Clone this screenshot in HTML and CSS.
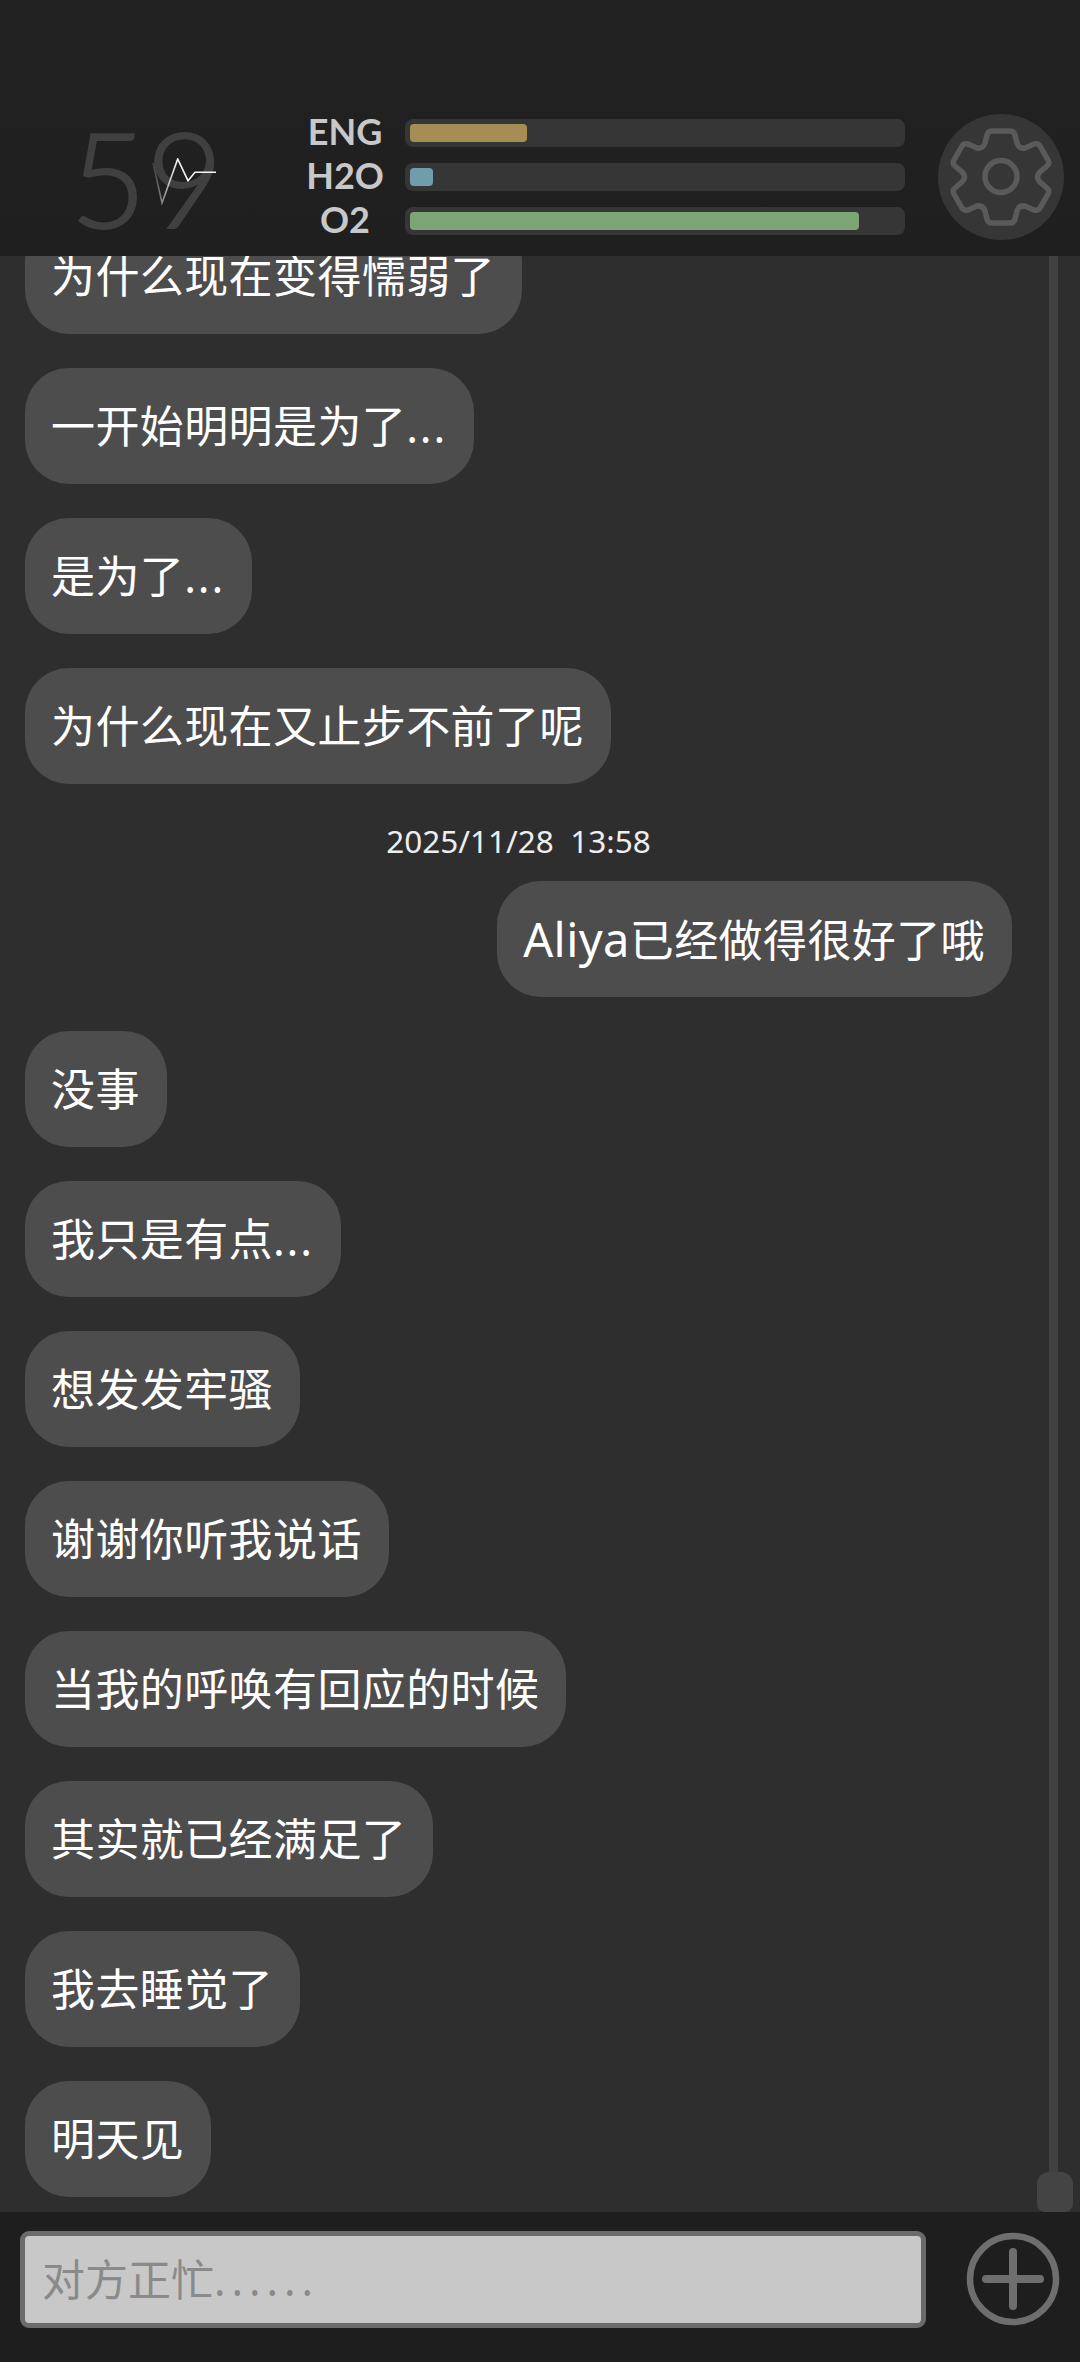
FILE: index.html

```html
<!DOCTYPE html>
<html lang="zh-CN">

<head>
  <meta charset="UTF-8">
  <title>Chat</title>
  <link rel="stylesheet" href="styles.css">
</head>

<body>
  <div class="app">

    <header class="status">
      <div class="readout">
        <span class="readout-num">59</span>
        <svg class="pulse" width="70" height="50" viewBox="0 0 70 50" fill="none">
          <defs>
            <linearGradient id="pulseFade" gradientUnits="userSpaceOnUse" x1="0" y1="0" x2="24" y2="0">
              <stop offset="0" stop-color="#fff" stop-opacity="0.1"></stop>
              <stop offset="1" stop-color="#fff" stop-opacity="0.95"></stop>
            </linearGradient>
          </defs>
          <polyline points="1,5 10,45 25.7,1 36,22.7 43,14.3 64,14.3" stroke="url(#pulseFade)" stroke-width="1.6"></polyline>
        </svg>
      </div>

      <div class="meters">
        <span class="meter-label">ENG</span>
        <div class="meter"><div class="meter-fill fill-eng" style="width: 117px"></div></div>
        <span class="meter-label">H2O</span>
        <div class="meter"><div class="meter-fill fill-h2o" style="width: 23px"></div></div>
        <span class="meter-label">O2</span>
        <div class="meter"><div class="meter-fill fill-o2" style="width: 449px"></div></div>
      </div>

      <button class="gear-btn" type="button" aria-label="settings">
        <svg width="126" height="126" viewBox="-63 -63 126 126" fill="none" stroke="#5a5a5a" stroke-width="5.5" stroke-linejoin="round">
          <path d="M-9 -46 H9 Q13 -46 14 -42 L16 -34 Q18 -28 24 -29 L33 -33 Q37 -34 39 -31 L47 -17 Q49 -13 46 -11 L39 -5 Q34 0 39 5 L46 11 Q49 13 47 17 L39 31 Q37 34 33 33 L24 29 Q18 28 16 34 L14 42 Q13 46 9 46 H-9 Q-13 46 -14 42 L-16 34 Q-18 28 -24 29 L-33 33 Q-37 34 -39 31 L-47 17 Q-49 13 -46 11 L-39 5 Q-34 0 -39 -5 L-46 -11 Q-49 -13 -47 -17 L-39 -31 Q-37 -34 -33 -33 L-24 -29 Q-18 -28 -16 -34 L-14 -42 Q-13 -46 -9 -46 Z"></path>
          <circle cx="0" cy="-0.5" r="16"></circle>
        </svg>
      </button>
    </header>

    <main class="chat">
      <div class="messages">
        <div class="bubble">为什么现在变得懦弱了</div>
        <div class="bubble">一开始明明是为了<span class="dots">...</span></div>
        <div class="bubble">是为了<span class="dots">...</span></div>
        <div class="bubble">为什么现在又止步不前了呢</div>
        <div class="timestamp">2025/11/28  13:58</div>
        <div class="bubble bubble-me"><span class="latin">Aliya</span>已经做得很好了哦</div>
        <div class="bubble">没事</div>
        <div class="bubble">我只是有点<span class="dots">...</span></div>
        <div class="bubble">想发发牢骚</div>
        <div class="bubble">谢谢你听我说话</div>
        <div class="bubble">当我的呼唤有回应的时候</div>
        <div class="bubble">其实就已经满足了</div>
        <div class="bubble">我去睡觉了</div>
        <div class="bubble">明天见</div>
      </div>
      <div class="scroll-rail">
        <div class="scroll-track"></div>
        <div class="scroll-thumb"></div>
      </div>
    </main>

    <footer class="composer">
      <div class="composer-input">对方正忙<span class="input-dots">......</span></div>
      <button class="add-btn" type="button" aria-label="add">
        <svg width="94" height="94" viewBox="0 0 94 94" fill="none" stroke="#6e6e6e">
          <circle cx="47" cy="47" r="43" stroke-width="6.5"></circle>
          <path d="M47 20 V74 M20 47 H74" stroke-width="8" stroke-linecap="round"></path>
        </svg>
      </button>
    </footer>

  </div>
</body>

</html>
```

FILE: styles.css

```css
* {
  box-sizing: border-box;
}

body {
  margin: 0;
  background: #2e2e2e;
  font-family: "Noto Sans", "Noto Sans CJK SC", sans-serif;
}

.app {
  display: flex;
  flex-direction: column;
  width: 1080px;
  height: 2362px;
  overflow: hidden;
}

/* top status bar */
.status {
  flex: none;
  display: flex;
  align-items: center;
  height: 256px;
  padding: 114px 16px 16px 0;
  background: linear-gradient(to bottom, #222, #1f1f1f);
}

.readout {
  position: relative;
  width: 285px;
  padding-left: 70px;
}

.readout-num {
  display: block;
  font-family: Lato, sans-serif;
  font-weight: 300;
  font-size: 132px;
  line-height: 130px;
  color: #404040;
  -webkit-text-stroke: 2px #404040;
}

.pulse {
  position: absolute;
  left: 152px;
  top: 46px;
}

.meters {
  display: grid;
  grid-template-columns: 120px 500px;
  grid-auto-rows: 28px;
  row-gap: 16px;
}

.meter-label {
  font-family: Lato, sans-serif;
  font-weight: 700;
  font-size: 36px;
  line-height: 24px;
  text-align: center;
  color: #c8c8c8;
}

.meter {
  height: 28px;
  padding: 5px;
  background: #363636;
  border-radius: 8px;
}

.meter-fill {
  height: 18px;
  border-radius: 4px;
}

.fill-eng {
  background: #a68d54;
}

.fill-h2o {
  background: #6f9dab;
}

.fill-o2 {
  background: #7da576;
}

.gear-btn {
  width: 126px;
  height: 126px;
  margin-left: 33px;
  padding: 0;
  background: #363636;
  border: none;
  border-radius: 50%;
}

.gear-btn svg {
  display: block;
}

/* chat */
.chat {
  flex: 1;
  display: flex;
  min-height: 0;
  padding-right: 7px;
}

.messages {
  flex: 1;
  display: flex;
  flex-direction: column;
  justify-content: flex-end;
  align-items: flex-start;
  min-width: 0;
  padding: 0 25px 15px;
  overflow: hidden;
}

.bubble {
  flex: none;
  height: 116px;
  margin-top: 34px;
  padding: 26px 27px 26px 26px;
  background: #4d4d4d;
  border-radius: 44px;
  font-size: 44px;
  line-height: 64px;
  letter-spacing: 0.4px;
  color: #fff;
  white-space: nowrap;
}

.dots {
  letter-spacing: 1.8px;
}

.latin {
  font-size: 47px;
}

.bubble-me {
  align-self: flex-end;
  margin-top: 0;
}

.timestamp {
  flex: none;
  align-self: center;
  margin: 38px 0 21px;
  font-size: 31.5px;
  line-height: 38px;
  color: #eee;
  white-space: pre;
}

.scroll-rail {
  flex: none;
  display: flex;
  flex-direction: column;
  align-items: center;
  width: 36px;
}

.scroll-track {
  flex: 1;
  width: 9px;
  margin-right: 3px;
  background: #414141;
}

.scroll-thumb {
  flex: none;
  width: 36px;
  height: 40px;
  background: #444;
  border-radius: 12px 12px 8px 8px;
}

/* bottom input bar */
.composer {
  flex: none;
  display: flex;
  align-items: flex-start;
  height: 150px;
  padding: 19px 0 0 20px;
  background: #1e1e1e;
}

.composer-input {
  width: 906px;
  height: 97px;
  padding-left: 17px;
  background: #c8c8c8;
  border: 5px solid #6b6b6b;
  border-radius: 9px;
  font-size: 43px;
  line-height: 87px;
  color: #8a8a8a;
}

.input-dots {
  letter-spacing: 6px;
}

.add-btn {
  width: 94px;
  height: 94px;
  margin: 1px 0 0 40px;
  padding: 0;
  background: none;
  border: none;
}

.add-btn svg {
  display: block;
}
```
